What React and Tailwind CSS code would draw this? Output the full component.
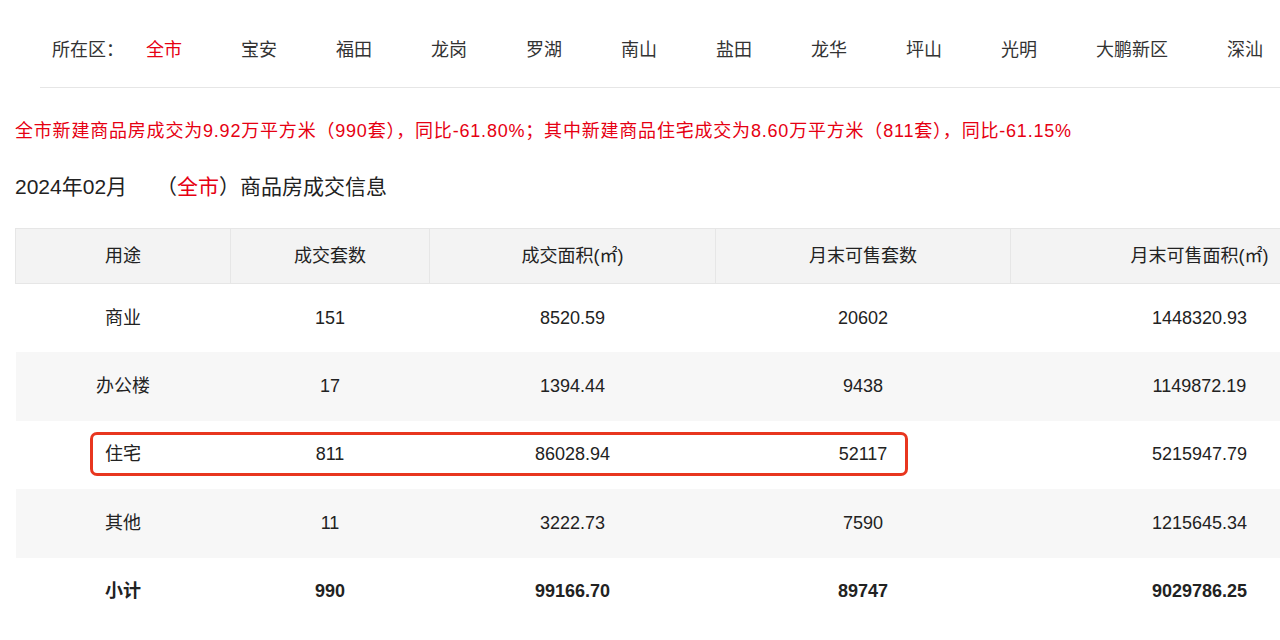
const districts = ["全市", "宝安", "福田", "龙岗", "罗湖", "南山", "盐田", "龙华", "坪山", "光明", "大鹏新区", "深汕"];

const columns = [
    { label: "用途", w: "w-[215px]" },
    { label: "成交套数", w: "w-[199px]" },
    { label: "成交面积(㎡)", w: "w-[286px]" },
    { label: "月末可售套数", w: "w-[295px]" },
    { label: "月末可售面积(㎡)", w: "w-[378px]" },
];

const rows = [
    ["商业", "151", "8520.59", "20602", "1448320.93"],
    ["办公楼", "17", "1394.44", "9438", "1149872.19"],
    ["住宅", "811", "86028.94", "52117", "5215947.79"],
    ["其他", "11", "3222.73", "7590", "1215645.34"],
    ["小计", "990", "99166.70", "89747", "9029786.25"],
];

export default function App() {
    return (
        <div className="w-[1280px] h-[640px] overflow-hidden bg-white text-[#333] font-['Liberation_Sans','Noto_Sans_CJK_SC',sans-serif]">
            <div className="w-[1420px]">
                {/* District filter */}
                <div className="flex items-center pl-[52px] pt-[39px] text-[18px] leading-[22px]">
                    <span className="mr-[22px]">所在区：</span>
                    {districts.map((d, i) => (
                        <span
                            key={d}
                            className={`mr-[59px] ${i === 0 ? "text-[#e60012]" : "text-[#333]"}`}
                        >
                            {d}
                        </span>
                    ))}
                </div>
                <div className="ml-[40px] mt-[26px] border-t border-[#e6e6e6]" />

                {/* Summary */}
                <p className="ml-[15px] mt-[31px] text-[18px] leading-[24px] tracking-[0.8px] text-[#e60012]">
                    全市新建商品房成交为9.92万平方米（990套），同比-61.80%；其中新建商品住宅成交为8.60万平方米（811套），同比-61.15%
                </p>

                <h2 className="ml-[15px] mt-[30px] text-[21px] leading-[28px] text-[#222]">
                    2024年02月<span className="ml-[29px]">（<span className="text-[#e60012]">全市</span>）商品房成交信息</span>
                </h2>

                {/* Table */}
                <div className="relative ml-[15px] mt-[27px]">
                    <table className="table-fixed border-collapse text-[18px] text-[#222]">
                        <thead>
                            <tr className="h-[55px] bg-[#f3f3f3]">
                                {columns.map((c) => (
                                    <th
                                        key={c.label}
                                        className={`${c.w} border border-[#e6e6e6] font-normal text-center`}
                                    >
                                        {c.label}
                                    </th>
                                ))}
                            </tr>
                        </thead>
                        <tbody>
                            {rows.map((r, i) => (
                                <tr
                                    key={r[0]}
                                    className={`h-[68.5px] ${i % 2 === 1 ? "bg-[#f7f7f7]" : "bg-white"} ${i === rows.length - 1 ? "font-bold" : ""}`}
                                >
                                    {r.map((v, j) => (
                                        <td key={j} className="text-center">
                                            {v}
                                        </td>
                                    ))}
                                </tr>
                            ))}
                        </tbody>
                    </table>

                    {/* annotation box over the 住宅 row */}
                    <div className="absolute left-[75px] top-[204px] w-[818px] h-[44px] rounded-[7px] border-[3px] border-[#e8361f]" />
                </div>
            </div>
        </div>
    );
}
